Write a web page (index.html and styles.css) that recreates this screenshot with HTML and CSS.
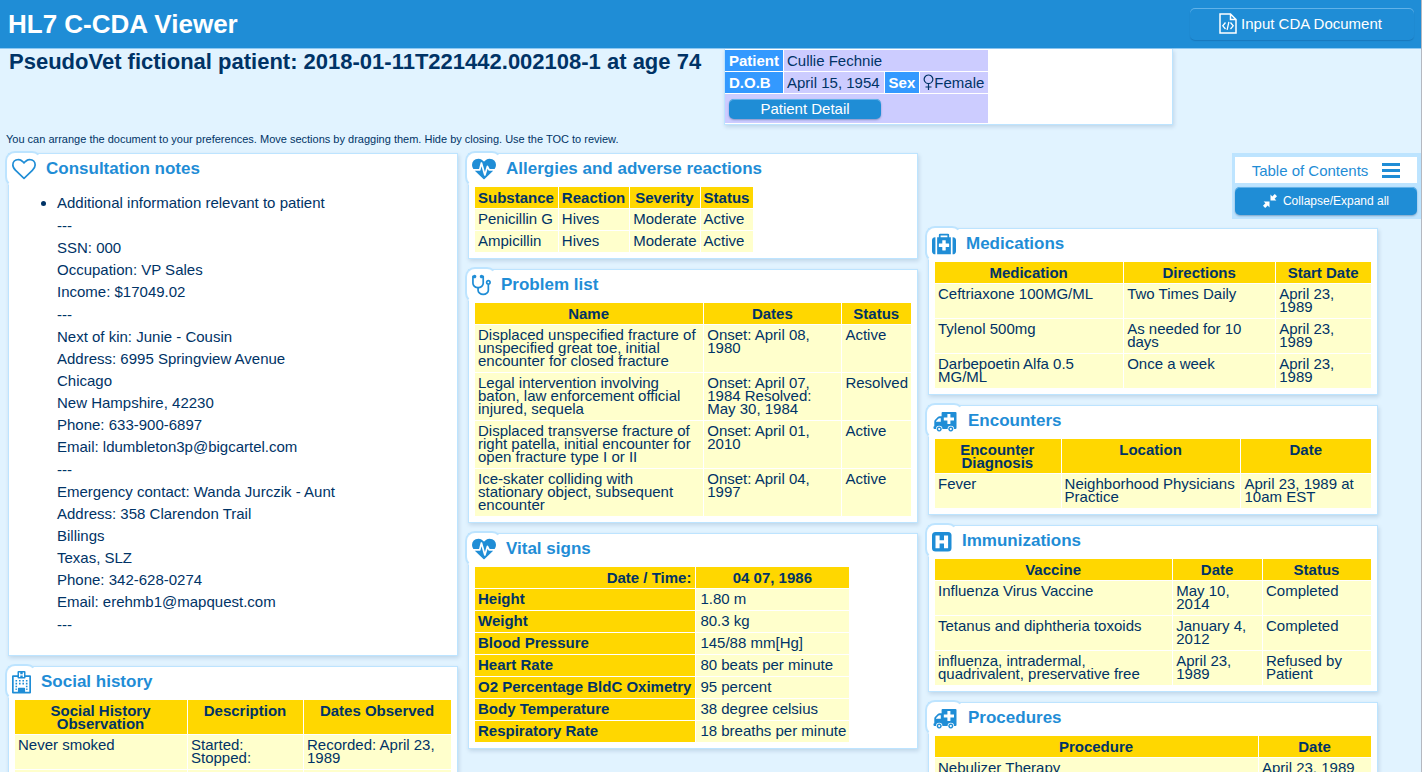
FILE: index.html
```html
<!DOCTYPE html>
<html lang="en">
<head>
<meta charset="utf-8">
<title>HL7 C-CDA Viewer</title>
<link rel="stylesheet" href="styles.css">
</head>
<body>
<svg class="sprite" aria-hidden="true">
  <symbol id="heart" viewBox="0 0 1792 1792"><path d="M1664 596q0-81-21.500-143t-55-98.500-81.500-59.500-94-31-98-8-112 25.500-110.500 64-86.500 72-60 61.500q-18 22-49 22t-49-22q-24-28-60-61.500t-86.500-72-110.500-64-112-25.500-98 8-94 31-81.500 59.500-55 98.500-21.500 143q0 168 187 355l581 560 580-559q188-188 188-356zm128 0q0 221-229 450l-623 600q-18 18-44 18t-44-18l-624-602q-10-8-27.500-26t-55.500-65.500-68-97.500-53.500-121-23.500-138q0-220 127-344t351-124q62 0 126.500 21.500t120 58 95.500 68.500 76 68q36-36 76-68t95.500-68.500 120-58 126.500-21.500q224 0 351 124t127 344z"/></symbol>
  <symbol id="heartbeat" viewBox="0 0 1792 1792"><path d="M1280 1024h305q-5 6-10 10.500t-9 7.500l-3 4-623 600q-18 18-44 18t-44-18l-624-602q-5-2-21-20h369q22 0 39.500-13.500t22.500-34.500l70-281 190 667q6 20 23 33t39 13q21 0 38-13t23-33l146-485 56 112q18 35 57 35zm512-428q0 145-103 300h-369l-111-221q-8-17-25.500-27t-36.500-8q-45 5-56 46l-129 430-196-686q-6-20-23.500-33t-39.500-13-39 13.500-22 34.500l-116 464h-423q-103-155-103-300 0-220 127-344t351-124q62 0 126.500 21.500t120 58 95.500 68.500 76 68q36-36 76-68t95.500-68.500 120-58 126.500-21.500q224 0 351 124t127 344z"/></symbol>
  <symbol id="stethoscope" viewBox="192 0 1408 1792"><path d="M1472 704q0-26-19-45t-45-19-45 19-19 45 19 45 45 19 45-19 19-45zm128 0q0 62-35.500 111t-92.500 70v395q0 159-131.500 271.500t-316.500 112.500-316.500-112.500-131.500-271.500v-132q-164-20-274-128t-110-252v-512q0-26 19-45t45-19q6 0 16 2 17-30 47-48t65-18q53 0 90.500 37.500t37.500 90.500-37.500 90.500-90.500 37.500q-33 0-64-18v402q0 106 94 181t226 75 226-75 94-181v-402q-31 18-64 18-53 0-90.500-37.500t-37.500-90.500 37.500-90.500 90.500-37.500q35 0 65 18t47 48q10-2 16-2 26 0 45 19t19 45v512q0 144-110 252t-274 128v132q0 106 94 181t226 75 226-75 94-181v-395q-57-21-92.500-70t-35.500-111q0-80 56-136t136-56 136 56 56 136z"/></symbol>
  <symbol id="medkit" viewBox="0 0 1792 1792"><path d="M1280 1088v-192q0-14-9-23t-23-9h-224v-224q0-14-9-23t-23-9h-192q-14 0-23 9t-9 23v224h-224q-14 0-23 9t-9 23v192q0 14 9 23t23 9h224v224q0 14 9 23t23 9h192q14 0 23-9t9-23v-224h224q14 0 23-9t9-23zm-640-704h512v-128h-512v128zm-384 0v1280h-32q-92 0-158-66t-66-158v-832q0-92 66-158t158-66h32zm1152 0v1280h-1024v-1280h128v-160q0-40 28-68t68-28h576q40 0 68 28t28 68v160h128zm384 224v832q0 92-66 158t-158 66h-32v-1280h32q92 0 158 66t66 158z"/></symbol>
  <symbol id="hsquare" viewBox="0 0 20 24"><rect x="0" y="3" width="19.500" height="19.500" rx="3.500"/><path d="M3.500 6.400H7.600V11.200H12V6.400H16.100V19.200H12V14.400H7.600V19.200H3.500z" fill="#fff"/></symbol>
  <symbol id="ambulance" viewBox="0 0 26 24"><path fill-rule="evenodd" d="M10.500 3H23.500q1 0 1 1v15q0 1-1 1H22a3.200 3.200 0 0 0-6.400 0H10.400a3.200 3.200 0 0 0-6.400 0H2.500q-1 0-1-1v-1q0-.8.800-.8V12.500q0-1 .8-1.800L5.800 8q.8-.8 1.800-.8H9.600V4q0-1 .9-1zM4 12.700H8.800V9.200H7.600Q7 9.200 6.600 9.600L4.400 11.700q-.4.400-.4 1zM15.400 5V8.600H11.800V11.400H15.400V15H18.400V11.400H22V8.600H18.400V5z"/><path fill-rule="evenodd" d="M7.200 17.600a2.500 2.500 0 1 0 .001 0zm0 1.500a1 1 0 1 1-.001 0zM18.800 17.600a2.500 2.500 0 1 0 .001 0zm0 1.500a1 1 0 1 1-.001 0z"/></symbol>
  <symbol id="hospital" viewBox="0 0 19 24"><path fill-rule="evenodd" d="M5.500 2q0-1 1-1h6q1 0 1 1v3.200h4.500q1 0 1 1v16.200q0 1-1 1H1q-1 0-1-1V6.200q0-1 1-1h4.500zM1.700 6.900v14.800h4.200v-3.200q0-.8.800-.8h5.600q.8 0 .8.800v3.200h4.200V6.900h-3.800v.7q0 1-1 1h-6q-1 0-1-1v-.7zM7 2.500v4.600h1.300V5.500h2.400v1.600H12V2.500h-1.300v1.700H8.300V2.500z"/><path d="M3.500 9.900h1.600v1.600H3.500zm3.500 0h1.600v1.600H7zm3.400 0h1.600v1.600h-1.600zm3.500 0h1.600v1.600h-1.600zM3.500 12.800h1.600v1.600H3.500zm3.500 0h1.600v1.600H7zm3.400 0h1.600v1.600h-1.600zm3.500 0h1.600v1.600h-1.600zM3.500 15.700h1.600v1.600H3.500zm10.400 0h1.600v1.600h-1.600zM3.500 18.600h1.300v1.500H3.500zm10.700 0h1.300v1.500h-1.300z"/></symbol>
</svg>
<div class="page">
  <header class="topbar">
    <h1 class="brand">HL7 C-CDA Viewer</h1>
    <button class="btn btn-input" type="button">
      <svg class="icon-file" viewBox="0 0 18 21" aria-hidden="true"><path d="M1 1H11.500L17 6.500V20H1zM11.500 1V6.500H17" fill="none" stroke="currentColor" stroke-width="1.500"/><path d="M6.500 9.500L3.800 12.800L6.500 16M11.500 9.500L14.200 12.800L11.500 16M9.900 8.800L8.100 16.800" fill="none" stroke="currentColor" stroke-width="1.300"/></svg>
      Input CDA Document
    </button>
  </header>

  <section class="patient">
    <h2 class="doc-title">PseudoVet fictional patient: 2018-01-11T221442.002108-1 at age 74</h2>
    <div class="patient-box">
      <table class="patient-table">
        <tr><th>Patient</th><td colspan="3">Cullie Fechnie</td></tr>
        <tr><th>D.O.B</th><td>April 15, 1954</td><th>Sex</th><td><span class="sex"><svg class="icon-sex" viewBox="0 0 11 17" aria-hidden="true"><path d="M5.500 1a4.300 4.300 0 1 0 .001 0zM5.500 9.600V16M2.500 13H8.500" fill="none" stroke="currentColor" stroke-width="1.200"/></svg>Female</span></td></tr>
        <tr><td class="detail" colspan="4"><button class="btn btn-detail" type="button">Patient Detail</button></td></tr>
      </table>
    </div>
  </section>

  <p class="hint">You can arrange the document to your preferences. Move sections by dragging them. Hide by closing. Use the TOC to review.</p>

  <main class="board">
    <div class="column">
      <section class="card">
        <h3 class="card-title"><span class="tab"><svg class="icon"><use href="#heart"/></svg></span>Consultation notes</h3>
        <ul class="notes">
          <li>
            <div class="note-group">Additional information relevant to patient</div>
            <div class="note-group">---<br>SSN: 000<br>Occupation: VP Sales<br>Income: $17049.02</div>
            <div class="note-group">---<br>Next of kin: Junie - Cousin<br>Address: 6995 Springview Avenue<br>Chicago<br>New Hampshire, 42230<br>Phone: 633-900-6897<br>Email: ldumbleton3p@bigcartel.com</div>
            <div class="note-group">---<br>Emergency contact: Wanda Jurczik - Aunt<br>Address: 358 Clarendon Trail<br>Billings<br>Texas, SLZ<br>Phone: 342-628-0274<br>Email: erehmb1@mapquest.com</div>
            <div class="note-group">---</div>
          </li>
        </ul>
      </section>
      <section class="card">
        <h3 class="card-title"><span class="tab"><svg class="icon icon-narrow"><use href="#hospital"/></svg></span>Social history</h3>
        <table class="data wide">
          <thead><tr><th class="col-observation">Social History Observation</th><th class="col-description">Description</th><th>Dates Observed</th></tr></thead>
          <tbody>
            <tr><td>Never smoked</td><td>Started:<br>Stopped:</td><td>Recorded: April 23, 1989</td></tr>
            <tr><td>&nbsp;</td><td></td><td></td></tr>
          </tbody>
        </table>
      </section>
    </div>

    <div class="column">
      <section class="card">
        <h3 class="card-title"><span class="tab"><svg class="icon"><use href="#heartbeat"/></svg></span>Allergies and adverse reactions</h3>
        <table class="data">
          <thead><tr><th>Substance</th><th>Reaction</th><th>Severity</th><th>Status</th></tr></thead>
          <tbody>
            <tr><td>Penicillin G</td><td>Hives</td><td>Moderate</td><td>Active</td></tr>
            <tr><td>Ampicillin</td><td>Hives</td><td>Moderate</td><td>Active</td></tr>
          </tbody>
        </table>
      </section>
      <section class="card">
        <h3 class="card-title"><span class="tab"><svg class="icon icon-narrow"><use href="#stethoscope"/></svg></span>Problem list</h3>
        <table class="data wide">
          <thead><tr><th>Name</th><th>Dates</th><th>Status</th></tr></thead>
          <tbody>
            <tr><td>Displaced unspecified fracture of unspecified great toe, initial encounter for closed fracture</td><td>Onset: April 08, 1980</td><td>Active</td></tr>
            <tr><td>Legal intervention involving baton, law enforcement official injured, sequela</td><td>Onset: April 07, 1984 Resolved: May 30, 1984</td><td>Resolved</td></tr>
            <tr><td>Displaced transverse fracture of right patella, initial encounter for open fracture type I or II</td><td>Onset: April 01, 2010</td><td>Active</td></tr>
            <tr><td>Ice-skater colliding with stationary object, subsequent encounter</td><td>Onset: April 04, 1997</td><td>Active</td></tr>
          </tbody>
        </table>
      </section>
      <section class="card">
        <h3 class="card-title"><span class="tab"><svg class="icon"><use href="#heartbeat"/></svg></span>Vital signs</h3>
        <table class="data vitals">
          <thead><tr><th class="when">Date / Time:</th><th>04 07, 1986</th></tr></thead>
          <tbody>
            <tr><th>Height</th><td>1.80 m</td></tr>
            <tr><th>Weight</th><td>80.3 kg</td></tr>
            <tr><th>Blood Pressure</th><td>145/88 mm[Hg]</td></tr>
            <tr><th>Heart Rate</th><td>80 beats per minute</td></tr>
            <tr><th>O2 Percentage BldC Oximetry</th><td>95 percent</td></tr>
            <tr><th>Body Temperature</th><td>38 degree celsius</td></tr>
            <tr><th>Respiratory Rate</th><td>18 breaths per minute</td></tr>
          </tbody>
        </table>
      </section>
    </div>

    <div class="column column-last">
      <section class="card">
        <h3 class="card-title"><span class="tab"><svg class="icon"><use href="#medkit"/></svg></span>Medications</h3>
        <table class="data wide">
          <thead><tr><th>Medication</th><th>Directions</th><th>Start Date</th></tr></thead>
          <tbody>
            <tr><td>Ceftriaxone 100MG/ML</td><td>Two Times Daily</td><td>April 23, 1989</td></tr>
            <tr><td>Tylenol 500mg</td><td>As needed for 10 days</td><td>April 23, 1989</td></tr>
            <tr><td>Darbepoetin Alfa 0.5 MG/ML</td><td>Once a week</td><td>April 23, 1989</td></tr>
          </tbody>
        </table>
      </section>
      <section class="card">
        <h3 class="card-title"><span class="tab"><svg class="icon icon-wide"><use href="#ambulance"/></svg></span>Encounters</h3>
        <table class="data wide">
          <thead><tr><th>Encounter Diagnosis</th><th>Location</th><th>Date</th></tr></thead>
          <tbody>
            <tr><td>Fever</td><td>Neighborhood Physicians Practice</td><td>April 23, 1989 at 10am EST</td></tr>
          </tbody>
        </table>
      </section>
      <section class="card">
        <h3 class="card-title"><span class="tab"><svg class="icon icon-square"><use href="#hsquare"/></svg></span>Immunizations</h3>
        <table class="data wide">
          <thead><tr><th>Vaccine</th><th>Date</th><th>Status</th></tr></thead>
          <tbody>
            <tr><td>Influenza Virus Vaccine</td><td>May 10, 2014</td><td>Completed</td></tr>
            <tr><td>Tetanus and diphtheria toxoids</td><td>January 4, 2012</td><td>Completed</td></tr>
            <tr><td>influenza, intradermal, quadrivalent, preservative free</td><td>April 23, 1989</td><td>Refused by Patient</td></tr>
          </tbody>
        </table>
      </section>
      <section class="card">
        <h3 class="card-title"><span class="tab"><svg class="icon icon-wide"><use href="#ambulance"/></svg></span>Procedures</h3>
        <table class="data wide">
          <thead><tr><th>Procedure</th><th class="col-date">Date</th></tr></thead>
          <tbody><tr><td>Nebulizer Therapy</td><td>April 23, 1989</td></tr></tbody>
        </table>
      </section>
    </div>

    <nav class="toc">
      <button class="toc-toggle" type="button">Table of Contents
        <svg class="icon-menu" viewBox="0 0 18 15" aria-hidden="true"><path d="M0 0h18v3H0zM0 6h18v3H0zM0 12h18v3H0z" fill="currentColor"/></svg>
      </button>
      <button class="btn btn-collapse" type="button">
        <svg class="icon-collapse" viewBox="0 0 14 14" aria-hidden="true"><path d="M7.500 .6V6.500h5.900L11.600 4.700L14 2.200L11.800 0L9.300 2.400zM6.500 13.400V7.500H.6L2.400 9.300L0 11.800L2.200 14L4.700 11.600z" fill="currentColor"/></svg>
        Collapse/Expand all
      </button>
    </nav>
  </main>
</div>
</body>
</html>
```
FILE: styles.css
```css
* { box-sizing: border-box; }

body {
  margin: 0;
  background: #e1f3ff;
  color: #003366;
  font: 15px "Liberation Sans", Arial, sans-serif;
}

h1, h2, h3, p, ul { margin: 0; }

button {
  font: inherit;
  cursor: pointer;
}

.sprite { display: none; }

.page {
  min-height: 100vh;
  border-right: 1px solid #b4b8c0;
}

.topbar {
  display: flex;
  align-items: center;
  justify-content: space-between;
  padding: 8px 7px 8px 8px;
  background: #1f8dd6;
  border-bottom: 1px solid #8cc8f2;
  color: #fff;
}

.brand {
  font-size: 26px;
  line-height: 32px;
}

.btn {
  display: flex;
  align-items: center;
  justify-content: center;
  border: 0;
  border-radius: 5px;
  background: #1f8dd6;
  color: #fff;
  box-shadow: inset 0 1px 0 #62b2e8, 0 1px 2px rgba(0, 40, 90, 0.35);
}

.btn-input {
  gap: 4px;
  width: 224px;
  height: 32px;
  padding: 0 3px 2px 0;
  box-shadow: inset 0 1px 0 #62b2e8, 0 1px 1px rgba(0, 40, 90, 0.2);
}

.icon-file {
  width: 18px;
  height: 21px;
}

.patient {
  display: flex;
  align-items: flex-start;
  padding: 0 9px;
}

.doc-title {
  flex: 0 0 715px;
  font-size: 22px;
  line-height: 25px;
}

.patient-box {
  flex: 0 1 449px;
  background: #fff;
  border: 1px solid #bde4ff;
  border-top: 0;
  box-shadow: 1px 2px 4px rgba(0, 50, 100, 0.15);
}

.patient-table {
  border-spacing: 1px;
  margin-left: -1px;
}

.patient-table th,
.patient-table td {
  height: 21px;
  padding: 0 4px 0 3px;
  background: #ccccff;
  line-height: 19px;
  text-align: left;
  white-space: nowrap;
}

.patient-table th {
  padding-left: 4px;
  background: #3399ff;
  color: #fff;
}

.sex {
  display: flex;
  align-items: center;
}

.icon-sex {
  width: 11px;
  height: 17px;
}

.patient-table .detail {
  height: 29px;
  padding-left: 4px;
}

.btn-detail {
  width: 152px;
  height: 20px;
  padding: 0;
}

.hint {
  padding: 7px 6px;
  font-size: 11px;
  line-height: 14px;
}

.board {
  position: relative;
  display: grid;
  grid-template-columns: repeat(3, minmax(0, 1fr));
  align-items: start;
  gap: 10px;
  padding: 0 43px 10px 8px;
}

.column {
  display: flex;
  flex-direction: column;
  gap: 10px;
}

.column-last { padding-top: 75px; }

.card {
  padding: 0 5px 5px;
  background: #fff;
  border: 1px solid #bde4ff;
  box-shadow: 1px 2px 4px rgba(0, 50, 100, 0.15);
}

.card-title {
  display: flex;
  align-items: flex-start;
  gap: 4px;
  height: 32px;
  color: #1f8dd6;
  font-size: 17px;
  line-height: 30px;
}

.tab {
  display: flex;
  flex: none;
  height: 36px;
  margin: -3px 0 0 -9px;
  padding: 4px 4px 4px 5px;
  background: #fff;
  border: 2px solid transparent;
  border-top-color: #bde4ff;
  border-left-color: #bde4ff;
  border-radius: 10px;
}

.icon {
  width: 24px;
  height: 24px;
  fill: currentColor;
}

.icon-narrow { width: 19px; }
.icon-square { width: 20px; }
.icon-wide { width: 26px; }

.notes {
  padding: 6px 0 14px 43px;
  line-height: 22px;
}

.note-group + .note-group { margin-top: 1px; }

.data {
  border-spacing: 1px;
}

.wide { width: 100%; }

.data th,
.data td {
  padding: 3px 3px 5px;
  line-height: 13px;
  text-align: left;
  vertical-align: top;
}

.data th {
  padding-right: 4px;
  background: #ffd700;
}

.data td { background: #ffffcc; }

.data thead th {
  padding-top: 4px;
  padding-bottom: 4px;
  text-align: center;
}

.data thead .when { text-align: right; }

.vitals td { padding-left: 4px; }

.col-observation { width: 172px; }
.col-description { width: 115px; }
.col-date { width: 112px; }

.toc {
  position: absolute;
  top: 0;
  right: 0;
  display: flex;
  flex-direction: column;
  gap: 4px;
  width: 189px;
  padding: 4px 4px 4px 3px;
  background: #bde4ff;
}

.toc-toggle {
  display: flex;
  align-items: center;
  justify-content: center;
  gap: 14px;
  height: 26px;
  padding: 0;
  border: 0;
  background: #fff;
  color: #1f8dd6;
}

.icon-menu {
  width: 18px;
  height: 15px;
}

.btn-collapse {
  gap: 6px;
  height: 28px;
  padding: 0;
  font-size: 12px;
}

.icon-collapse {
  width: 14px;
  height: 14px;
}
```
